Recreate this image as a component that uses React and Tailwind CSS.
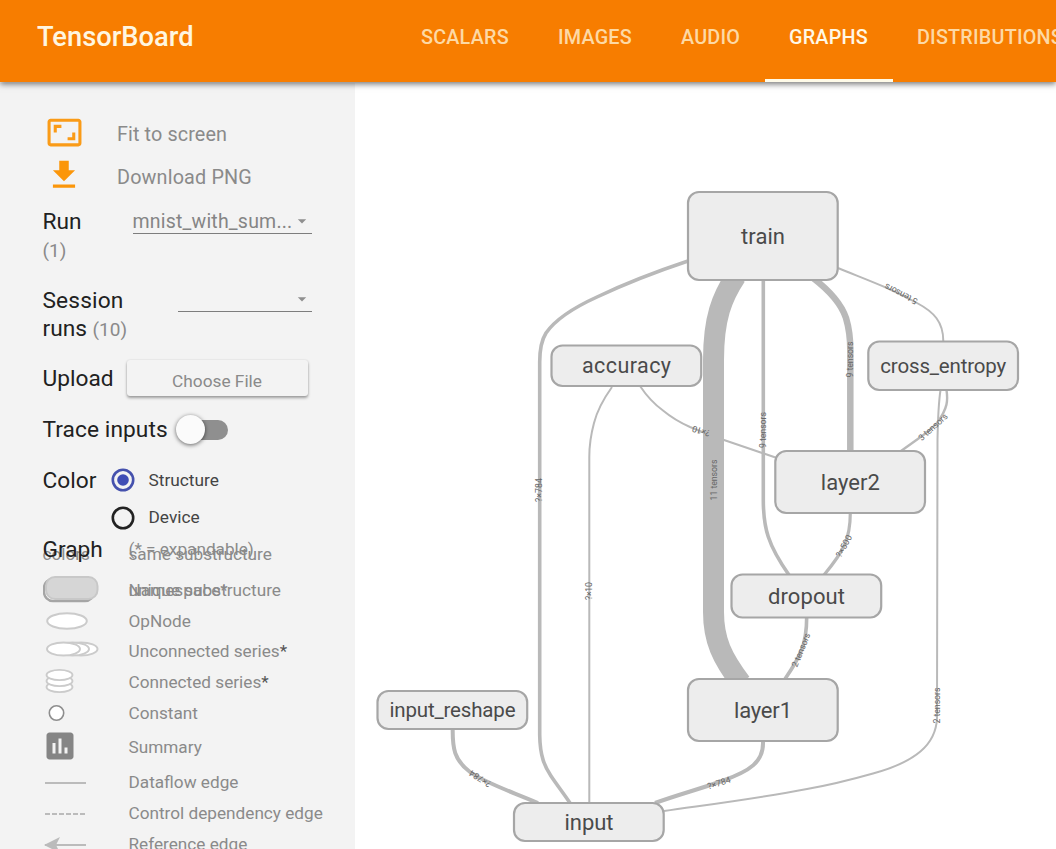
import React from "react";
import { MdAspectRatio, MdFileDownload, MdAssessment, MdArrowDropDown } from "react-icons/md";

const tabs = [
  { label: "SCALARS", width: "w-[88px]" },
  { label: "IMAGES", width: "w-[74px]" },
  { label: "AUDIO", width: "w-[59px]" },
  { label: "GRAPHS", width: "w-[79px]", active: true },
  { label: "DISTRIBUTIONS", width: "w-[150px]" },
];

const nodes = [
  { name: "train", x: 688, y: 192, h: 88, base: 244, size: 22, len: 44 },
  { name: "accuracy", x: 551.5, y: 345.5, h: 40.5, base: 373, size: 21.5, len: 89 },
  { name: "cross_entropy", x: 868.3, y: 341.5, h: 48.5, base: 373, size: 20.5, len: 126 },
  { name: "layer2", x: 775.3, y: 451, h: 62, base: 490, size: 22, len: 59 },
  { name: "dropout", x: 731.5, y: 574.5, h: 43, base: 604, size: 22, len: 77 },
  { name: "layer1", x: 688, y: 679, h: 62, base: 718, size: 22, len: 58 },
  { name: "input_reshape", x: 377.5, y: 691, h: 38, base: 717, size: 20.5, len: 126 },
  { name: "input", x: 514, y: 803, h: 38, base: 830, size: 22, len: 49 },
];

const edges = [
  { w: 3.6, d: "M688 261C655 272 620 286 597 297C575 307 555 320 546 333C541 341 539.7 352 539.7 362L539.7 735C540 757 545 767 551 776C557 785 564 794 570 803" },
  { w: 2, d: "M612 387C602 401 597 411 594 423C590.5 436 589.3 445 589.3 457L589.3 803" },
  { w: 2, d: "M640 386C648 398 654 404 663 410.500C672 418 681 423 690 427C701 431.500 712 436 724 440L777 458" },
  { w: 21, d: "M736 276C722 297 713.500 318 713.500 360L713.500 612C713.500 640 722 658 741 683" },
  { w: 3.6, d: "M763.300 280L763.300 500C763.300 528 768 545 789 575" },
  { w: 6.5, d: "M813 278C830 291 841 303 846 318C849 328 850.300 337 850.300 350L850.300 451" },
  { w: 2, d: "M838 268C855 275 871 281 887 288C898 293 908 298 917 303C934 312 943.300 322 943.300 341" },
  { w: 2.4, d: "M946.500 390C948 400 948 408 937 423C932 428 928 432 922 436L901 451" },
  { w: 2, d: "M940.500 390C939 400 938 412 937.500 440L937 718C936 745 915 762 873 773.500C850 780 830 785 807 789C760 798 720 803 664 811" },
  { w: 3.2, d: "M850.300 513C850.300 540 843 552 824 575" },
  { w: 3.6, d: "M806.700 617C806.700 645 800 657 785 679" },
  { w: 4, d: "M763 741C764 762 750 771 722 781C700 789 680 794 655 803" },
  { w: 4, d: "M452.700 729C452.500 748 454 760 470 772C485 783 510 791 538 803" },
];

const edgeLabels = [
  { t: "?×784", x: 539, y: 490, r: -90, len: 24 },
  { t: "?×10", x: 589, y: 591, r: -90, len: 18 },
  { t: "?×10", x: 701, y: 431, r: 197, len: 18 },
  { t: "11 tensors", x: 713.5, y: 480, r: -90, len: 41 },
  { t: "9 tensors", x: 763, y: 430, r: -90, len: 36 },
  { t: "9 tensors", x: 850, y: 359.5, r: -90, len: 36 },
  { t: "5 tensors", x: 901, y: 294, r: 207, len: 36 },
  { t: "3 tensors", x: 933, y: 427, r: -42, len: 36 },
  { t: "?×500", x: 844, y: 546, r: -61, len: 24 },
  { t: "2 tensors", x: 801, y: 650, r: -68, len: 36 },
  { t: "2 tensors", x: 937, y: 705.5, r: -90, len: 36 },
  { t: "?×784", x: 719, y: 783, r: -17, len: 24 },
  { t: "?×784", x: 480, y: 778.5, r: 213, len: 24 },
];

function Graph() {
  return (
    <svg className="block h-[766px] w-[701px] shrink-0" viewBox="355 83 701 766">
      <g fill="none" stroke="#b9b9b9">
        {edges.map((e) => (
          <path key={e.d} d={e.d} strokeWidth={e.w} />
        ))}
      </g>
      <g fill="#666" fontSize="8.8" textAnchor="middle">
        {edgeLabels.map((l) => (
          <text key={`${l.x}-${l.y}`} transform={`translate(${l.x} ${l.y}) rotate(${l.r})`} y="3" textLength={l.len}>
            {l.t}
          </text>
        ))}
      </g>
      {nodes.map((n) => (
        <g key={n.name}>
          <rect x={n.x} y={n.y} width="149.700" height={n.h} rx="11" fill="#ededed" stroke="#a6a6a6" strokeWidth="2.2" />
          <text x={n.x + 75} y={n.base} fontSize={n.size} fill="#4a4a4a" textAnchor="middle" textLength={n.len}>
            {n.name}
          </text>
        </g>
      ))}
    </svg>
  );
}

function Select({ value, className }) {
  return (
    <div className={`flex h-[25px] items-center border-b border-[#7d7d7d] text-[19.500px] text-[#858585] ${className}`}>
      <span className="grow whitespace-nowrap tracking-[0.200px]">{value}</span>
      <MdArrowDropDown className="size-[20px] shrink-0 text-[#8f8f8f]" />
    </div>
  );
}

function Radio({ label, checked }) {
  return (
    <label className="flex h-[37.500px] items-center gap-[14px] text-[17.300px] text-[#444]">
      <svg className="size-[24px]" viewBox="0 0 24 24">
        <circle cx="12" cy="12" r="10.200" fill="none" stroke={checked ? "#4551ad" : "#222"} strokeWidth="2.600" />
        {checked && <circle cx="12" cy="12" r="5.800" fill="#3f4db5" />}
      </svg>
      {label}
    </label>
  );
}

function LegendRow({ className, icon, children }) {
  return (
    <div className={`flex shrink-0 items-center ${className}`}>
      <div className="flex w-[86px] shrink-0 items-center">{icon}</div>
      <div className="whitespace-nowrap">{children}</div>
    </div>
  );
}

const namespaceIcon = (
  <svg className="-mt-[4px] h-[30px] w-[60px]" viewBox="0 0 60 30" strokeWidth="2">
    <rect x="1" y="5" width="50" height="22" rx="9" fill="#fff" stroke="#a5a5a5" strokeWidth="2.500" />
    <rect x="3" y="3" width="51.500" height="22" rx="9" fill="#d6d6d6" stroke="#c8c8c8" />
  </svg>
);

const opIcon = (
  <svg className="-mt-[1px] h-[20px] w-[60px]" viewBox="0 0 60 20">
    <ellipse cx="24" cy="10" rx="19.800" ry="7.800" fill="#fff" stroke="#cbcbcb" strokeWidth="2" />
  </svg>
);

const unconnectedIcon = (
  <svg className="-mt-[5px] h-[20px] w-[60px]" viewBox="0 0 60 20" fill="#fff" stroke="#cbcbcb" strokeWidth="2">
    <ellipse cx="38" cy="10" rx="16.500" ry="6.500" />
    <ellipse cx="29.500" cy="10" rx="16.500" ry="6.500" />
    <ellipse cx="20.500" cy="10" rx="16.500" ry="6.500" />
  </svg>
);

const connectedIcon = (
  <svg className="-mt-[3px] h-[26px] w-[60px]" viewBox="0 0 60 26" fill="#fff" stroke="#cbcbcb" strokeWidth="1.800">
    <ellipse cx="16.500" cy="19" rx="13" ry="5.200" />
    <ellipse cx="16.500" cy="13" rx="13" ry="5.200" />
    <ellipse cx="16.500" cy="7" rx="13" ry="5.200" />
  </svg>
);

const constantIcon = (
  <svg className="h-[20px] w-[60px]" viewBox="0 0 60 20">
    <circle cx="13.500" cy="9" r="7.200" fill="#fff" stroke="#8e8e8e" strokeWidth="1.600" />
  </svg>
);

function EdgeIcon({ dash, arrow }) {
  return (
    <svg className="h-[20px] w-[60px]" viewBox="0 0 60 20">
      <path d="M2 10H43" stroke="#bbb" strokeWidth="2" strokeDasharray={dash} />
      {arrow && <path d="M1 10L17 2L13 10L17 18Z" fill="#bbb" />}
    </svg>
  );
}

function Sidebar() {
  return (
    <aside className="flex w-[355px] shrink-0 flex-col overflow-hidden bg-[#f3f3f3] pt-[31px] pl-[42.500px]">
      <div className="flex h-[42px] shrink-0 items-center text-[19.800px] text-[#8a8a8a]">
        <MdAspectRatio className="-mt-[6px] ml-[3px] size-[37px] text-[#fa9b17]" />
        <span className="ml-[34.500px] tracking-[0.120px]">Fit to screen</span>
      </div>
      <div className="flex h-[43px] shrink-0 items-center text-[19.800px] text-[#8a8a8a]">
        <MdFileDownload className="-mt-[6px] ml-[2px] size-[38px] text-[#fb960a]" />
        <span className="ml-[34.500px] tracking-[0.160px]">Download PNG</span>
      </div>
      <div className="flex h-[79px] shrink-0 pt-[8px] text-[22.700px] leading-[29px] text-[#212121]">
        <div className="w-[90px]">
          <div>Run</div>
          <div className="text-[19px] text-[#8a8a8a]">(1)</div>
        </div>
        <Select value="mnist_with_sum..." className="mt-[2px] w-[179px]" />
      </div>
      <div className="flex h-[76px] shrink-0 pt-[9px] text-[22.700px] leading-[28px] text-[#212121]">
        <div className="w-[135.500px]">
          <div className="tracking-[0.150px]">Session</div>
          <div>
            runs <span className="text-[19px] text-[#8a8a8a]">(10)</span>
          </div>
        </div>
        <Select value="" className="w-[133.500px]" />
      </div>
      <div className="flex h-[50px] shrink-0 items-center text-[22.700px] text-[#212121]">
        <span className="w-[84px] pt-[1px]">Upload</span>
        <button className="-mt-[3px] h-[36px] w-[181px] rounded-[3px] pt-[6px] text-[17.300px] leading-[30px] text-[#8a8a8a] shadow-[0_2px_3px_rgba(0,0,0,0.35),0_0_2px_rgba(0,0,0,0.12)]">
          Choose File
        </button>
      </div>
      <div className="flex h-[51px] shrink-0 items-center text-[22.700px] text-[#212121]">
        <span className="w-[133.500px] pt-[2px] whitespace-nowrap tracking-[0.080px]">Trace inputs</span>
        <span className="flex h-[20px] w-[52px] items-center rounded-full bg-[linear-gradient(90deg,transparent_40%,#8f8f8f_40%)]">
          <span className="size-[29px] rounded-full bg-[#fbfbfb] shadow-[0_1px_4px_rgba(0,0,0,0.6)]" />
        </span>
      </div>
      <div className="flex h-[81px] shrink-0 pt-[6.500px] text-[22.700px] leading-[37.500px] text-[#212121]">
        <span className="w-[68px]">Color</span>
        <div>
          <Radio label="Structure" checked />
          <Radio label="Device" />
        </div>
      </div>
      <div className="flex shrink-0 flex-col text-[17.200px] text-[#8a8a8a]">
        <LegendRow className="-mb-[19px] h-[28px]" icon={<span className="relative z-10 pt-[1px] text-[22.700px] text-[#212121]">Graph</span>}>
          (* = expandable)
        </LegendRow>
        <LegendRow className="h-[20px]" icon="colors">
          same substructure
        </LegendRow>
        <LegendRow className="mt-[9px] h-[34px]" icon={namespaceIcon}>
          <div className="grid">
            <span className="col-start-1 row-start-1">Namespace*</span>
            <span className="col-start-1 row-start-1">unique substructure</span>
          </div>
        </LegendRow>
        <LegendRow className="-mt-[1px] h-[29px]" icon={opIcon}>OpNode</LegendRow>
        <LegendRow className="h-[31px]" icon={unconnectedIcon}>
          Unconnected series<span className="text-[#555]">*</span>
        </LegendRow>
        <LegendRow className="h-[31px]" icon={connectedIcon}>
          Connected series<span className="text-[#555]">*</span>
        </LegendRow>
        <LegendRow className="h-[31px]" icon={constantIcon}>Constant</LegendRow>
        <LegendRow className="h-[37px]" icon={<MdAssessment className="-mt-[4px] -ml-[1px] size-[36px] text-[#858585]" />}>
          Summary
        </LegendRow>
        <LegendRow className="h-[33px]" icon={<EdgeIcon />}>Dataflow edge</LegendRow>
        <LegendRow className="h-[29px]" icon={<EdgeIcon dash="5 2" />}>Control dependency edge</LegendRow>
        <LegendRow className="h-[33px]" icon={<EdgeIcon arrow />}>Reference edge</LegendRow>
      </div>
    </aside>
  );
}

export default function App() {
  return (
    <div className="flex h-[849px] w-[1056px] flex-col overflow-hidden bg-white font-[Roboto,sans-serif]">
      <header className="relative z-10 flex h-[82px] shrink-0 bg-[#f77d00] shadow-[0_2px_6px_rgba(0,0,0,0.55)]">
        <h1 className="w-[396.500px] shrink-0 pl-[37px] text-[27.300px] leading-[75px] font-medium text-[#fff6e0]">TensorBoard</h1>
        <nav className="flex overflow-hidden text-[19.800px] leading-[76px] font-medium">
          {tabs.map((t) => (
            <a
              key={t.label}
              className={`box-content h-[76px] shrink-0 px-[24.500px] tracking-[0.200px] whitespace-nowrap ${t.width} ${
                t.active ? "border-b-[3px] border-[#fffbe8] pb-[3px] text-[#fff8e6]" : "text-[#fdd9a5]"
              }`}
            >
              {t.label}
            </a>
          ))}
        </nav>
      </header>
      <main className="flex h-[767px] shrink-0 pt-[1px]">
        <Sidebar />
        <Graph />
      </main>
    </div>
  );
}
